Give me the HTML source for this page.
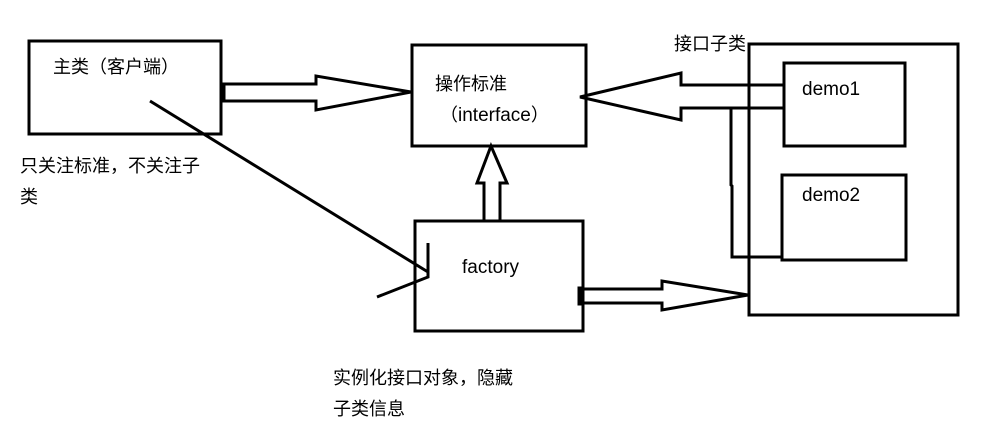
<!DOCTYPE html>
<html><head><meta charset="utf-8"><style>
html,body{margin:0;padding:0;background:#fff;width:988px;height:448px;overflow:hidden}
svg{position:absolute;left:0;top:0}
.t{position:absolute;font-family:"Liberation Sans","Microsoft YaHei","Noto Sans CJK SC",sans-serif;font-size:18px;color:#000;white-space:nowrap;line-height:22px}
.l{font-size:19px}
</style></head><body>
<svg width="988" height="448" viewBox="0 0 988 448" fill="none" stroke="#000" stroke-width="3">
<rect x="29" y="41" width="192" height="93"/>
<rect x="412" y="45" width="174" height="101"/>
<rect x="415" y="221" width="168" height="110"/>
<rect x="749" y="44" width="209" height="271"/>
<rect x="784" y="63" width="121" height="83"/>
<rect x="782" y="175" width="124" height="85"/>
<path d="M222 84 H316 V76 L411 92 L316 110 V101 H222"/>
<rect x="221" y="84" width="3" height="17" fill="#000"/>
<path d="M484 220 V183 H477 L491 146 L507 183 H500 V220"/>
<path d="M784 85 H681 V73 L580 97 L681 120 V108 H784"/>
<path d="M731 108 V185 L732 186 V257 H782"/>
<path d="M583 289 H662 V281 L748 295 L662 310 V303 H583"/>
<rect x="579" y="288" width="4" height="16" fill="#000"/>
<path d="M150 101 L428 272"/>
<path d="M428 243 V277 L377 297"/>
</svg>
<div class="t" style="left:53px;top:56px">主类（客户端）</div>
<div class="t" style="left:435px;top:73px">操作标准</div>
<div class="t" style="left:440px;top:104px"><span>（</span><span class="l">interface</span><span>）</span></div>
<div class="t l" style="left:462px;top:257px">factory</div>
<div class="t" style="left:20px;top:155px">只关注标准，不关注子</div>
<div class="t" style="left:20px;top:186px">类</div>
<div class="t" style="left:674px;top:33px">接口子类</div>
<div class="t l" style="left:802px;top:79px">demo1</div>
<div class="t l" style="left:802px;top:185px">demo2</div>
<div class="t" style="left:333px;top:367px">实例化接口对象，隐藏</div>
<div class="t" style="left:333px;top:398px">子类信息</div>
</body></html>
